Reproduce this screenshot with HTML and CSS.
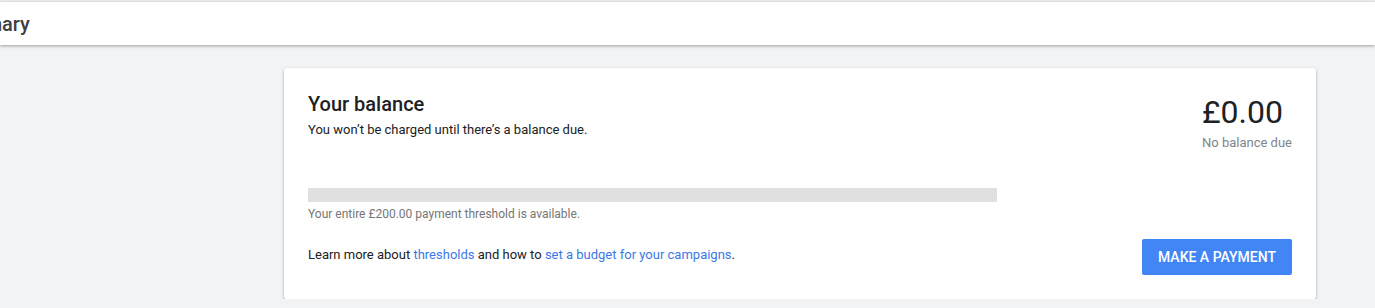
FILE: index.html
```html
<!DOCTYPE html>
<html lang="en">
<head>
    <meta charset="UTF-8">
    <meta name="viewport" content="width=device-width, initial-scale=1.0">
    <title>Summary</title>
    <link rel="stylesheet" href="styles.css">
</head>
<body>
    <!-- Barra do topo -->
    <header class="top-bar">
        <h1 class="page-title">Summary</h1>
    </header>

    <main class="content">
        <!-- Cartão do saldo -->
        <section class="balance-card">
            <div class="balance-top">
                <div class="balance-info">
                    <h2>Your balance</h2>
                    <p class="subtitle">You won’t be charged until there’s a balance due.</p>
                </div>
                <div class="balance-amount">
                    <div class="amount">£0.00</div>
                    <div class="amount-note">No balance due</div>
                </div>
            </div>

            <div class="threshold-bar"><div class="threshold-fill" style="width: 0%"></div></div>
            <p class="threshold-text">Your entire £200.00 payment threshold is available.</p>

            <div class="balance-bottom">
                <p class="learn-more">Learn more about <a href="#">thresholds</a> and how to <a href="#">set a budget for your campaigns</a>.</p>
                <button class="pay-button">Make a payment</button>
            </div>
        </section>
    </main>
</body>
</html>
```

FILE: styles.css
```css
/* Estilo geral */
body {
    font-family: Roboto, "Liberation Sans", Arial, sans-serif;
    background-color: #f1f3f4;
    color: #202124;
    margin: 0;
    overflow: hidden;
}

.top-bar {
    background-color: #ffffff;
    height: 43px;
    margin-top: 2px;
    box-shadow: 0 1px 3px rgba(0, 0, 0, 0.35), 0 -1px 2px rgba(0, 0, 0, 0.06);
    display: flex;
    align-items: center;
    overflow: hidden;
}

/* o titulo fica rolado para a esquerda, como no original */
.page-title {
    margin: 0 0 0 -56px;
    font-size: 20px;
    font-weight: 500;
    color: #3c4043;
}

.content {
    padding: 23px 59px 0 284px;
}

/* Cartão do saldo */
.balance-card {
    background-color: #ffffff;
    border-radius: 2px;
    box-shadow: 0 1px 3px rgba(0, 0, 0, 0.3), 0 1px 1px rgba(0, 0, 0, 0.1);
    padding: 24px 24px 24px 24px;
}

.balance-top {
    display: flex;
    justify-content: space-between;
}

.balance-info h2 {
    margin: 0;
    font-size: 20px;
    line-height: 24px;
    font-weight: 500;
}

.subtitle {
    margin: 4px 0 0 0;
    font-size: 13px;
    line-height: 20px;
}

.amount {
    font-size: 32px;
    line-height: 40px;
}

.amount-note {
    margin-top: 1px;
    font-size: 13px;
    line-height: 20px;
    color: #80868b;
}

.threshold-bar {
    width: 70%;
    height: 14px;
    margin-top: 35px;
    background-color: #e0e0e0;
}

.threshold-fill {
    height: 100%;
    background-color: #4285f4;
}

.threshold-text {
    margin: 4px 0 0 0;
    font-size: 12px;
    line-height: 16px;
    color: #757575;
}

.balance-bottom {
    display: flex;
    justify-content: space-between;
    align-items: flex-start;
    margin-top: 17px;
}

.learn-more {
    margin: 6px 0 0 0;
    font-size: 13px;
    line-height: 20px;
}

.learn-more a {
    color: #3b78e7;
    text-decoration: none;
}

.pay-button {
    font-family: inherit;
    font-size: 14px;
    font-weight: 500;
    text-transform: uppercase;
    height: 36px;
    padding: 0 16px;
    background-color: #4285f4;
    color: #fff;
    border: none;
    border-radius: 2px;
    cursor: pointer;
}

.pay-button:hover {
    background-color: #3b78e7;
}
```
